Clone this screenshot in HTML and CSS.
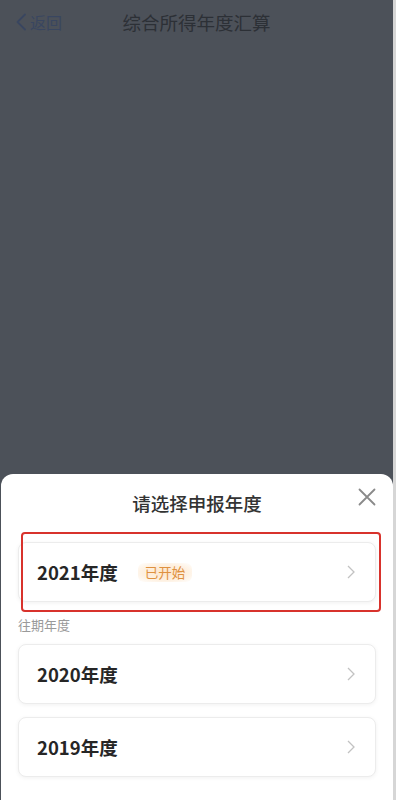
FILE: index.html
```html
<!DOCTYPE html>
<html lang="zh">
<head>
<meta charset="utf-8">
<title>综合所得年度汇算</title>
<link rel="stylesheet" href="styles.css">
</head>
<body>
<div class="screen">
  <div class="nav">
    <div class="back">
      <svg class="back-icon" width="12" height="18" viewBox="0 0 12 18"><path d="M10 1.5 L2.5 9 L10 16.5" fill="none" stroke="currentColor" stroke-width="1.8" stroke-linecap="round" stroke-linejoin="round"/></svg>
      <span>返回</span>
    </div>
    <div class="nav-title">综合所得年度汇算</div>
  </div>
  <div class="dim"></div>
  <div class="sheet">
    <div class="sheet-head">
      <div class="sheet-title">请选择申报年度</div>
      <svg class="close" width="18" height="18" viewBox="0 0 18 18"><path d="M1.5 1.5 L16.5 16.5 M16.5 1.5 L1.5 16.5" stroke="#8a8a8a" stroke-width="1.8" stroke-linecap="round"/></svg>
    </div>
    <div class="card current">
      <span class="year">2021年度</span>
      <span class="badge">已开始</span>
      <svg class="chev" width="8" height="14" viewBox="0 0 8 14"><path d="M1 1 L7 7 L1 13" fill="none" stroke="#c2c2c2" stroke-width="1.3"/></svg>
    </div>
    <div class="section-label">往期年度</div>
    <div class="card">
      <span class="year">2020年度</span>
      <svg class="chev" width="8" height="14" viewBox="0 0 8 14"><path d="M1 1 L7 7 L1 13" fill="none" stroke="#c2c2c2" stroke-width="1.3"/></svg>
    </div>
    <div class="card gap">
      <span class="year">2019年度</span>
      <svg class="chev" width="8" height="14" viewBox="0 0 8 14"><path d="M1 1 L7 7 L1 13" fill="none" stroke="#c2c2c2" stroke-width="1.3"/></svg>
    </div>
    <div class="highlight"></div>
  </div>
</div>
</body>
</html>
```
FILE: styles.css
```css
* { box-sizing: border-box; }
html, body { margin: 0; padding: 0; }
body {
  font-family: "Noto Sans CJK SC", "Noto Sans", sans-serif;
  background: #d8d8d8;
}
.screen {
  width: 396px;
  height: 800px;
  display: flex;
  flex-direction: column;
  background: #4c5159;
  border-right: 3px solid #d6d6d6;
  padding-left: 1px;
  overflow: hidden;
}
.nav {
  height: 44px;
  flex: none;
  display: flex;
  align-items: center;
  justify-content: center;
  position: relative;
}
.back {
  position: absolute;
  left: 14px;
  top: 12px;
  display: flex;
  align-items: center;
  gap: 3px;
  color: #394660;
  font-size: 16px;
  line-height: 20px;
}
.nav-title {
  color: #2c3036;
  font-size: 18.5px;
  line-height: 24px;
  margin-left: -1px;
}
.dim { flex: 1; }
.sheet {
  flex: none;
  height: 326px;
  background: #ffffff;
  border-radius: 12px 12px 0 0;
  padding: 0 17px;
  position: relative;
}
.sheet-head {
  height: 58px;
  display: flex;
  align-items: center;
  justify-content: center;
  position: relative;
}
.sheet-title {
  font-size: 18.5px;
  font-weight: 500;
  color: #333333;
  line-height: 24px;
}
.close {
  position: absolute;
  right: 0px;
  top: 14px;
}
.card {
  height: 60px;
  background: #fff;
  border: 1px solid #ececec;
  border-radius: 8px;
  box-shadow: 0 1px 4px rgba(0,0,0,0.06);
  display: flex;
  align-items: center;
  padding: 0 20px 0 18px;
}
.card.current { margin-top: 10px; }
.card.gap { margin-top: 13px; }
.year {
  font-size: 18.5px;
  font-weight: 700;
  color: #262626;
  line-height: 24px;
}
.badge {
  margin-left: 20px;
  height: 19px;
  padding: 0 7px;
  font-size: 13.5px;
  line-height: 19px;
  color: #df9140;
  background: radial-gradient(ellipse at center, #fde6cc 0%, #fef1e2 60%, rgba(255,248,240,0) 100%);
  border-radius: 6px;
}
.chev { margin-left: auto; }
.section-label {
  font-size: 13px;
  color: #9a9a9a;
  line-height: 20px;
  margin-top: 13px;
  margin-bottom: 9px;
}
.highlight {
  position: absolute;
  left: 20px;
  top: 58px;
  width: 360px;
  height: 80px;
  border: 2.5px solid #d8322c;
  border-radius: 4px;
}
```
